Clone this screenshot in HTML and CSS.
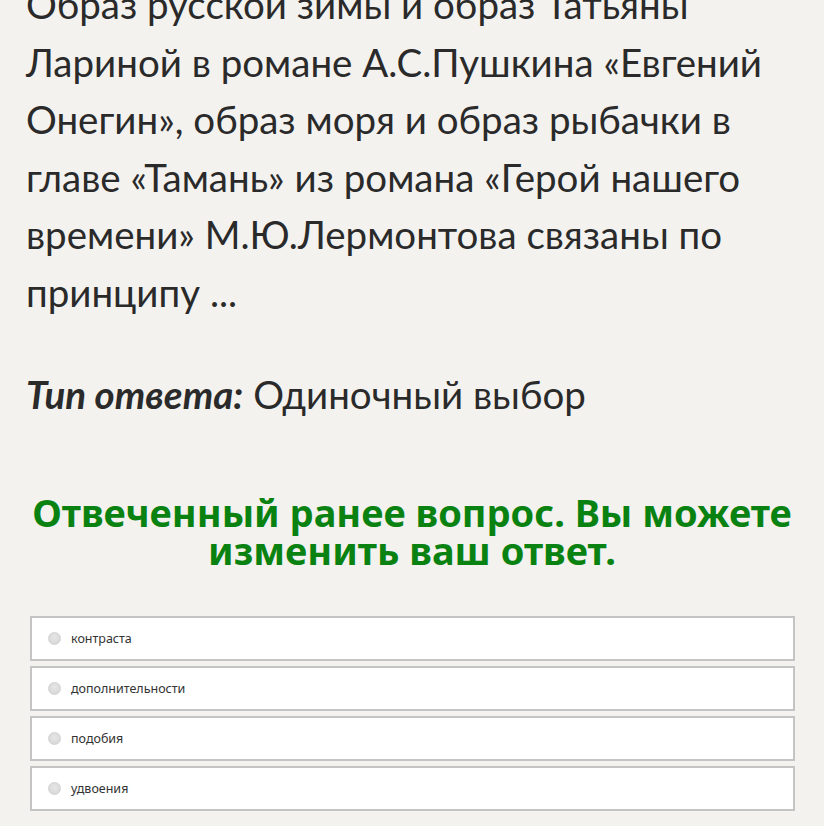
FILE: index.html
```html
<!DOCTYPE html>
<html lang="ru">
<head>
    <meta charset="UTF-8">
    <title>Вопрос</title>
    <link rel="stylesheet" href="styles.css">
</head>
<body>
    <div class="question">
        <p class="question-text">Образ русской зимы и образ Татьяны Лариной в романе А.С.Пушкина «Евгений Онегин», образ моря и образ рыбачки в главе «Тамань» из романа «Герой нашего времени» М.Ю.Лермонтова связаны по принципу ...</p>
        <p class="answer-type"><b><i>Тип ответа:</i></b> Одиночный выбор</p>
    </div>

    <h2 class="notice">Отвеченный ранее вопрос. Вы можете изменить ваш ответ.</h2>

    <div class="options">
        <label class="option"><input type="radio" name="answer"> <span>контраста</span></label>
        <label class="option"><input type="radio" name="answer"> <span>дополнительности</span></label>
        <label class="option"><input type="radio" name="answer"> <span>подобия</span></label>
        <label class="option"><input type="radio" name="answer"> <span>удвоения</span></label>
    </div>
</body>
</html>
```

FILE: styles.css
```css
body { margin: 0; background-color: #f3f2ef; font-family: "Noto Sans", "Open Sans", sans-serif; color: #2a2a2a; }

.question { padding: 0 26px; margin-top: -24px; font-family: Lato, "Noto Sans", sans-serif; }
.question-text { font-size: 38.5px; line-height: 57.5px; margin: 0; }
.answer-type { font-size: 38.5px; line-height: 58px; margin: 44px 0 0; }

.notice { text-align: center; color: #0a8212; font-size: 38px; line-height: 38px; font-weight: 700; margin: 70px 20px 0; }

.options { display: flex; flex-direction: column; gap: 5px; margin: 47px 29px 0 30px; }
.option { display: flex; align-items: center; height: 41px; padding: 0 0 0 16px; background-color: #fff; border: 2px solid #c4c4c4; font-size: 12.5px; color: #333; }
.option input { appearance: none; width: 13px; height: 13px; border-radius: 50%; background: radial-gradient(circle at 50% 40%, #e6e6e6, #d4d4d4); border: 1px solid #d2d2d2; margin: 0 10px 0 0; }
```
